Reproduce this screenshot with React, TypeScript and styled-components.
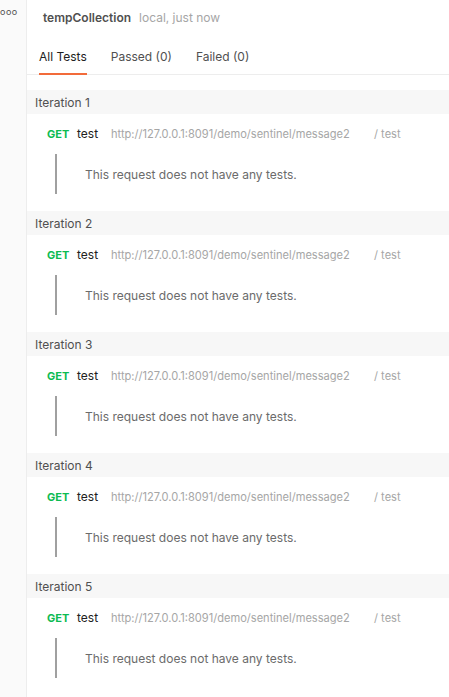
import React from 'react';
import styled, { createGlobalStyle } from 'styled-components';

const C = {
  sidebar: '#fafafa',
  border: '#ededed',
  headBg: '#f7f7f7',
  text: '#212121',
  muted: '#505050',
  light: '#a6a6a6',
  green: '#0cbb52',
  orange: '#f26b3a',
  bar: '#a0a0a0',
};

const GlobalStyle = createGlobalStyle`
  * { box-sizing: border-box; }
  body {
    margin: 0;
    background: #ffffff;
    font-family: Inter, 'Noto Sans', sans-serif;
    -webkit-font-smoothing: antialiased;
  }
`;

const Page = styled.div`
  display: flex;
  min-height: 697px;
`;

const Sidebar = styled.div`
  width: 27px;
  flex-shrink: 0;
  background: ${C.sidebar};
  border-right: 1px solid ${C.border};
  padding: 6px 0 0 0;
  font-size: 9px;
  letter-spacing: 0.5px;
  color: ${C.muted};
  line-height: 12px;
`;

const Main = styled.div`
  flex: 1;
  min-width: 0;
`;

const Header = styled.div`
  display: flex;
  align-items: baseline;
  gap: 8px;
  padding: 10px 0 0 16px;
  height: 39px;
`;

const Title = styled.span`
  font-size: 12px;
  font-weight: 600;
  color: ${C.muted};
`;

const Meta = styled.span`
  font-size: 12px;
  color: ${C.light};
`;

const Tabs = styled.div`
  display: flex;
  gap: 24px;
  padding-left: 12px;
  border-bottom: 1px solid ${C.border};
`;

const Tab = styled.div<{ $active?: boolean }>`
  font-size: 12px;
  padding: 10px 0 9px;
  color: ${p => (p.$active ? C.text : C.muted)};
  border-bottom: 2px solid ${p => (p.$active ? C.orange : 'transparent')};
  margin-bottom: -1px;
`;

const List = styled.div`
  padding-top: 15px;
`;

const Iteration = styled.div`
  margin-bottom: 17px;
`;

const IterHead = styled.div`
  height: 24px;
  display: flex;
  align-items: center;
  padding-left: 8px;
  background: ${C.headBg};
  font-size: 12px;
  color: ${C.muted};
`;

const Request = styled.div`
  display: flex;
  align-items: baseline;
  height: 40px;
  padding: 12px 0 0 20px;
  font-size: 12px;
`;

const Method = styled.span`
  color: ${C.green};
  font-weight: 700;
  font-size: 11px;
  width: 30px;
`;

const Name = styled.span`
  color: ${C.text};
  width: 34px;
`;

const Url = styled.span`
  color: ${C.light};
  font-size: 11.1px;
  width: 263px;
`;

const Path = styled.span`
  color: ${C.light};
  font-size: 11.1px;
`;

const Result = styled.div`
  margin-left: 28px;
  height: 40px;
  border-left: 2px solid ${C.bar};
  display: flex;
  align-items: center;
  padding-left: 28px;
  font-size: 12px;
  color: #6b6b6b;
`;

export default function App() {
  return (
    <>
      <GlobalStyle />
      <Page>
        <Sidebar>ooo</Sidebar>
        <Main>
          <Header>
            <Title>tempCollection</Title>
            <Meta>local, just now</Meta>
          </Header>
          <Tabs>
            <Tab $active>All Tests</Tab>
            <Tab>Passed (0)</Tab>
            <Tab>Failed (0)</Tab>
          </Tabs>
          <List>
            {[1, 2, 3, 4, 5].map(i => (
              <Iteration key={i}>
                <IterHead>Iteration {i}</IterHead>
                <Request>
                  <Method>GET</Method>
                  <Name>test</Name>
                  <Url>http://127.0.0.1:8091/demo/sentinel/message2</Url>
                  <Path>/ test</Path>
                </Request>
                <Result>This request does not have any tests.</Result>
              </Iteration>
            ))}
          </List>
        </Main>
      </Page>
    </>
  );
}
